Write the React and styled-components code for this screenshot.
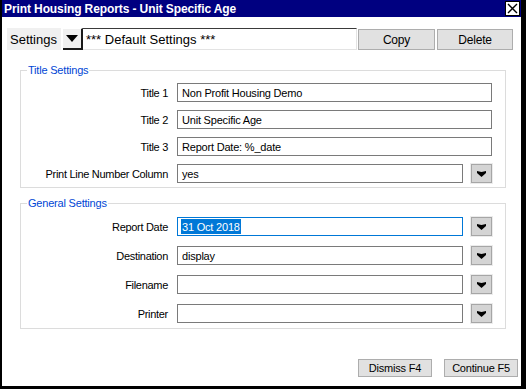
import styled, { createGlobalStyle } from "styled-components";

const Global = createGlobalStyle`
	html, body {
		margin: 0;
		padding: 0;
		background: #ffffff;
	}
	* {
		box-sizing: border-box;
	}
`;

const Window = styled.div`
	width: 526px;
	height: 389px;
	background: #000;
	padding: 0 5px 3px 2px;
	display: flex;
	flex-direction: column;
	font-family: "Liberation Sans", Arial, sans-serif;
	color: #000;
`;

const TitleBar = styled.div`
	height: 17px;
	background: #000080;
	color: #fff;
	display: flex;
	align-items: center;
	justify-content: space-between;
	padding: 0 1px 0 2px;
	font-weight: bold;
	font-size: 12px;
	letter-spacing: -0.1px;
`;

const CloseBox = styled.div`
	width: 15px;
	height: 15px;
	background: #fff;
	border: 1px solid #000;
	display: flex;
	align-items: center;
	justify-content: center;
`;

const Body = styled.div`
	flex: 1;
	background: #fff;
	display: flex;
	flex-direction: column;
	padding: 11px 3px 9px 5px;
`;

const SettingsRow = styled.div`
	display: flex;
	align-items: stretch;
	height: 22px;
`;

const SettingsLabel = styled.div`
	width: 54px;
	background: #f0f0f0;
	font-size: 13px;
	display: flex;
	align-items: center;
	padding-left: 3px;
	margin-right: 2px;
`;

const BigDrop = styled.div`
	width: 20px;
	background: #f0f0f0;
	border-right: 2px solid #1a1a1a;
	border-bottom: 2px solid #1a1a1a;
	border-top: 1px solid #fff;
	display: flex;
	align-items: center;
	justify-content: center;
`;

const SettingsField = styled.div`
	width: 274px;
	border-top: 1px solid #3a3a3a;
	border-right: 1px solid #e3e3e3;
	border-bottom: 1px solid #e3e3e3;
	font-size: 13px;
	display: flex;
	align-items: center;
	padding-left: 3px;
`;

const Button = styled.div`
	width: ${(p) => p.$w}px;
	height: ${(p) => p.$h}px;
	margin-left: ${(p) => p.$ml || 0}px;
	margin-top: ${(p) => p.$mt || 0}px;
	background: #e1e1e1;
	border: 1px solid #adadad;
	font-size: ${(p) => p.$fs}px;
	display: flex;
	align-items: center;
	justify-content: center;
	letter-spacing: -0.2px;
`;

const Group = styled.div`
	position: relative;
	margin: ${(p) => p.$mt}px 0 0 13px;
	width: 486px;
	border: 1px solid #dcdcdc;
	padding: ${(p) => p.$pt}px 13px ${(p) => p.$pb}px 0;
	display: flex;
	flex-direction: column;
	gap: ${(p) => p.$gap}px;
`;

const Legend = styled.div`
	position: absolute;
	top: -7px;
	left: 6px;
	background: #fff;
	color: #0046d5;
	font-size: 11px;
	padding: 0 1px;
	line-height: 13px;
	letter-spacing: -0.2px;
`;

const Row = styled.div`
	display: flex;
	align-items: center;
	height: 19px;
`;

const Label = styled.div`
	width: 147px;
	text-align: right;
	font-size: 11px;
	letter-spacing: -0.3px;
	margin-right: 9px;
	flex-shrink: 0;
`;

const Input = styled.div`
	width: ${(p) => (p.$select ? 286 : 315)}px;
	height: 19px;
	border: 1px solid ${(p) => (p.$focus ? "#0078d7" : "#7a7a7a")};
	background: #fff;
	font-size: 11px;
	letter-spacing: -0.2px;
	display: flex;
	align-items: stretch;
	padding: 1px 0 1px 3px;
	white-space: nowrap;
	overflow: hidden;
`;

const Value = styled.span`
	display: flex;
	align-items: center;
	padding: 0 1px;
	background: ${(p) => (p.$sel ? "#0078d7" : "transparent")};
	color: ${(p) => (p.$sel ? "#fff" : "#000")};
`;

const SmallDrop = styled.div`
	width: 21px;
	height: 19px;
	margin-left: 8px;
	background: #d4d4d4;
	border: 1px solid #a6a6a6;
	box-shadow: 0 0 0 1px #ececec;
	display: flex;
	align-items: center;
	justify-content: center;
`;

const Footer = styled.div`
	margin-top: auto;
	display: flex;
	justify-content: flex-end;
	gap: 12px;
`;

const Arrow = () => (
	<svg width="9" height="6" viewBox="0 0 9 6">
		<polygon points="0,0 4.5,1 9,0 9,2 4.5,6 0,2" fill="#000" />
	</svg>
);

const titleRows = [
	{ label: "Title 1", value: "Non Profit Housing Demo" },
	{ label: "Title 2", value: "Unit Specific Age" },
	{ label: "Title 3", value: "Report Date: %_date" },
	{ label: "Print Line Number Column", value: "yes", select: true },
];

const generalRows = [
	{ label: "Report Date", value: "31 Oct 2018", select: true, focus: true },
	{ label: "Destination", value: "display", select: true },
	{ label: "Filename", value: "", select: true },
	{ label: "Printer", value: "", select: true },
];

const FieldRow = ({ row }) => (
	<Row>
		<Label>{row.label}</Label>
		<Input $select={row.select} $focus={row.focus}>
			<Value $sel={row.focus}>{row.value}</Value>
		</Input>
		{row.select && (
			<SmallDrop>
				<Arrow />
			</SmallDrop>
		)}
	</Row>
);

const App = () => {
	return (
		<>
			<Global />
			<Window>
				<TitleBar>
					<span>Print Housing Reports - Unit Specific Age</span>
					<CloseBox>
						<svg width="11" height="11" viewBox="0 0 11 11">
							<path d="M1 1 L10 10 M10 1 L1 10" stroke="#000" strokeWidth="1.4" />
						</svg>
					</CloseBox>
				</TitleBar>
				<Body>
					<SettingsRow>
						<SettingsLabel>Settings</SettingsLabel>
						<BigDrop>
							<svg width="12" height="7" viewBox="0 0 12 7">
								<polygon points="0,0 12,0 6,7" fill="#000" />
							</svg>
						</BigDrop>
						<SettingsField>*** Default Settings ***</SettingsField>
						<Button $w={77} $h={21} $ml={1} $mt={1} $fs={12}>
							Copy
						</Button>
						<Button $w={76} $h={21} $ml={2} $mt={1} $fs={12}>
							Delete
						</Button>
					</SettingsRow>
					<Group $mt={20} $pt={12} $pb={4} $gap={8}>
						<Legend>Title Settings</Legend>
						{titleRows.map((r) => (
							<FieldRow key={r.label} row={r} />
						))}
					</Group>
					<Group $mt={15} $pt={13} $pb={5} $gap={10}>
						<Legend>General Settings</Legend>
						{generalRows.map((r) => (
							<FieldRow key={r.label} row={r} />
						))}
					</Group>
					<Footer>
						<Button $w={74} $h={18} $fs={11}>
							Dismiss F4
						</Button>
						<Button $w={74} $h={18} $fs={11}>
							Continue F5
						</Button>
					</Footer>
				</Body>
			</Window>
		</>
	);
};

export default App;
